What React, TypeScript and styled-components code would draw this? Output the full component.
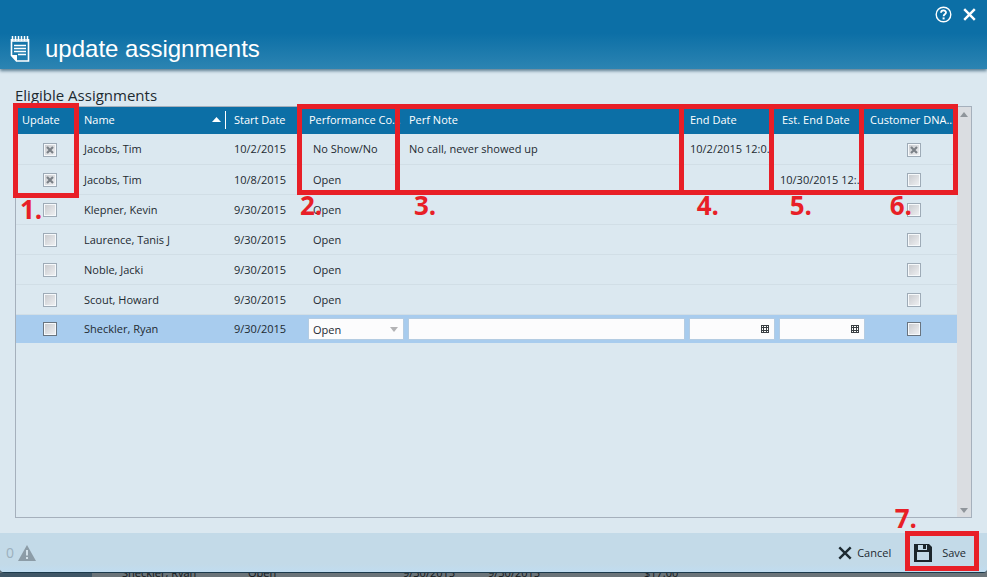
import React from "react";
import styled, { createGlobalStyle, css } from "styled-components";

const uiFont = '"Open Sans", "Noto Sans", sans-serif';
const red = "#e81f27";

const GlobalStyle = createGlobalStyle`
  *, *::before, *::after { box-sizing: border-box; }
  body {
    margin: 0;
    background: #6b7479;
    color: #1d2a31;
    font-family: ${uiFont};
    font-size: 11px;
  }
  button, input, select { font: inherit; color: inherit; }
`;

const Page = styled.div`
  display: flex;
  flex-direction: column;
  min-height: 100vh;
`;

const Dialog = styled.main`
  position: relative;
  flex: 1;
  display: flex;
  flex-direction: column;
  border-bottom: 1px solid #1c3a4c;
  border-radius: 0 0 4px 4px;
  background: #dbe8f0;
`;

const Header = styled.header`
  display: flex;
  flex-direction: column;
  height: 69px;
  padding: 5px 9px 0;
  background: linear-gradient(#0c6fa6, #0c6fa6 48%, #2c84b2);
  box-shadow: 0 2px 3px #5f7f93;
  color: #fff;
`;

const WindowButtons = styled.div`
  display: flex;
  justify-content: flex-end;
  gap: 8px;
  height: 18px;
`;

const IconButton = styled.button`
  display: grid;
  place-items: center;
  width: 18px;
  height: 18px;
  padding: 0;
  border: 0;
  background: none;
  color: inherit;
`;

const TitleRow = styled.div`
  display: flex;
  align-items: center;
  gap: 14px;
  height: 52px;
  padding-top: 6px;
`;

const Title = styled.h1`
  margin: 0;
  font: 400 24px/28px "Liberation Sans", Arial, sans-serif;
`;

const Body = styled.section`
  flex: 1;
  display: flex;
  flex-direction: column;
  padding: 16px 15px 15px;
`;

const Caption = styled.h2`
  margin: 0;
  height: 21px;
  font-size: 15px;
  font-weight: 400;
  line-height: 20px;
`;

const GridFrame = styled.div`
  position: relative;
  flex: 1;
  display: flex;
  border: 1px solid #a5b0bc;
`;

const TableArea = styled.div`
  flex: 1;
  min-width: 0;
`;

const Table = styled.table`
  width: 100%;
  table-layout: fixed;
  border-collapse: collapse;
`;

const Col = styled.col<{ $w?: number }>`
  ${(p) => p.$w && css`width: ${p.$w}px;`}
`;

const HeadCell = styled.th<{ $pad?: number }>`
  height: 27px;
  padding: 0 0 2px ${(p) => p.$pad ?? 6}px;
  background: #0c6fa6;
  color: #fff;
  font-weight: 400;
  text-align: left;
  white-space: nowrap;
`;

const SortLabel = styled.span`
  display: flex;
  align-items: center;
  justify-content: space-between;
  height: 18px;
  padding-right: 4px;
  border-right: 1px solid #fff;
`;

const Row = styled.tr<{ $selected?: boolean }>`
  height: ${(p) => (p.$selected ? 28 : 30)}px;
  border-bottom: 1px solid ${(p) => (p.$selected ? "#a8ccee" : "#d1dee6")};
  background: ${(p) => (p.$selected ? "#a8ccee" : "transparent")};
`;

const Cell = styled.td<{ $pad?: number }>`
  padding: 0 0 0 ${(p) => p.$pad ?? 6}px;
  white-space: nowrap;
`;

const Clip = styled.span<{ $w: number }>`
  display: block;
  width: ${(p) => p.$w}px;
  overflow: hidden;
`;

const TickBox = styled.label`
  display: grid;
  width: 14px;
  height: 14px;
  margin-top: 2px;
  > * { grid-area: 1 / 1; }
  svg { pointer-events: none; place-self: center; }
`;

const Tick = styled.input<{ $strong?: boolean }>`
  appearance: none;
  width: 14px;
  height: 14px;
  margin: 0;
  border: 1px solid ${(p) => (p.$strong ? "#69747f" : "#9eabb7")};
  background: linear-gradient(135deg, #c6c8cc, #f1f2f4);
  box-shadow: inset 0 0 0 1px #f6f9fb;
`;

const Field = styled.div`
  display: flex;
  align-items: center;
  height: 20px;
  margin-top: 2px;
  padding-right: 5px;
  background: #fcfcfd;
  box-shadow: 0 0 0 1px #b4cce2;
`;

const TextInput = styled.input`
  flex: 1;
  min-width: 0;
  height: 20px;
  padding: 0 4px;
  border: 0;
  outline: 0;
  background: transparent;
`;

const Select = styled.select`
  appearance: none;
  flex: 1;
  min-width: 0;
  height: 20px;
  padding: 0 4px;
  border: 0;
  background: transparent;
`;

const PickButton = styled(IconButton)`
  width: 8px;
  height: 8px;
`;

const ScrollBar = styled.div`
  display: flex;
  flex-direction: column;
  justify-content: space-between;
  align-items: center;
  width: 14px;
  padding: 5px 0 4px;
  background: #dadde1;
`;

const Footer = styled.footer`
  display: flex;
  align-items: center;
  justify-content: space-between;
  height: 39px;
  padding: 0 21px 0 6px;
  border-radius: 0 0 4px 4px;
  background: linear-gradient(#c3dae8, #c3dae8 80%, #c0dcf0);
`;

const Status = styled.div`
  display: flex;
  align-items: center;
  gap: 4px;
  color: #9cb0bd;
  font-size: 14px;
`;

const Actions = styled.div`
  display: flex;
  gap: 23px;
`;

const ActionButton = styled.button<{ $gap: number }>`
  display: flex;
  align-items: center;
  gap: ${(p) => p.$gap}px;
  padding: 0;
  border: 0;
  background: none;
`;

const Backdrop = styled.div`
  display: flex;
  align-items: flex-end;
  height: 4px;
  overflow: hidden;
  background: linear-gradient(90deg, #3f5666 92px, #6b7479 92px);
  color: #14191c;
  line-height: 8px;
`;

const BackdropText = styled.span<{ $w: number }>`
  flex: 0 0 ${(p) => p.$w}px;
`;

const Outline = styled.div`
  position: absolute;
  border: 5px solid ${red};
  pointer-events: none;
`;

const UpdateOutline = styled(Outline)`
  left: -3px;
  top: -4px;
  width: 66px;
  height: 95px;
`;

const EditOutline = styled(Outline)`
  display: flex;
  left: 281px;
  right: 13px;
  top: -3px;
  height: 91px;
`;

const Segment = styled.div<{ $w?: number }>`
  flex: ${(p) => (p.$w ? `0 0 ${p.$w}px` : "1")};
  & + & { border-left: 5px solid ${red}; }
`;

const SaveOutline = styled(Outline)`
  right: 8px;
  bottom: 1px;
  width: 74px;
  height: 40px;
`;

const Mark = styled.span<{ $left?: number; $right?: number; $top?: number; $bottom?: number }>`
  position: absolute;
  ${(p) => p.$left !== undefined && css`left: ${p.$left}px;`}
  ${(p) => p.$right !== undefined && css`right: ${p.$right}px;`}
  ${(p) => p.$top !== undefined && css`top: ${p.$top}px;`}
  ${(p) => p.$bottom !== undefined && css`bottom: ${p.$bottom}px;`}
  color: ${red};
  font-size: 26px;
  font-weight: 700;
  line-height: 28px;
  pointer-events: none;
`;

const HelpIcon = () => (
  <svg width="17" height="17" viewBox="0 0 17 17" fill="none" stroke="currentColor">
    <circle cx="8.5" cy="8.5" r="7.3" strokeWidth="1.4" />
    <path d="M6 6.8C6 3.6 11 3.7 11 6.5c0 1.7-2.4 1.8-2.4 3.7" strokeWidth="1.8" />
    <path d="M8.6 11.4v2" strokeWidth="2" />
  </svg>
);

const CrossIcon = ({ size, width }: { size: number; width: number }) => (
  <svg width={size} height={size} viewBox="0 0 14 14" stroke="currentColor" strokeWidth={width}>
    <path d="M1.3 1.3l11.4 11.4M12.7 1.3L1.3 12.7" />
  </svg>
);

const NotepadIcon = () => (
  <svg width="22" height="28" viewBox="0 0 22 28" fill="none" stroke="#fff">
    <path d="M2.5 4v16.5l5 5.5h12V4" strokeWidth="1.6" />
    <path d="M2 5.5h18" strokeWidth="3" opacity="0.75" />
    <path d="M3.5 1v5M6.5 1v5M9.5 1v5M12.5 1v5M15.5 1v5M18.5 1v5" strokeWidth="1.5" />
    <path d="M5 10.5h12M5 13.5h12M5 16.5h12M9 19.5h8" strokeWidth="1.3" />
    <path d="M2 20h6v6.500z" fill="#fff" stroke="none" />
  </svg>
);

const WarningIcon = () => (
  <svg width="18" height="16" viewBox="0 0 18 16">
    <path d="M9 0l9 16H0z" fill="#8c9ca7" />
    <path d="M9 5v5.5M9 12v2" stroke="#d3e1ea" strokeWidth="2" />
  </svg>
);

const SaveIcon = () => (
  <svg width="18" height="18" viewBox="0 0 18 18">
    <path d="M0 0h15l3 3v15H0z" fill="#1b252b" />
    <path d="M4 1h9v5H4z M3 8h12v8H3z" fill="#c3dae8" />
    <path d="M9 1h3v4H9z" fill="#1b252b" />
  </svg>
);

const Triangle = ({ up, w = 8, color = "#8f959b" }: { up?: boolean; w?: number; color?: string }) => (
  <svg width={w} height="5" viewBox="0 0 8 5" preserveAspectRatio="none">
    <path d={up ? "M0 5l4-5 4 5z" : "M0 0l4 5 4-5z"} fill={color} />
  </svg>
);

const CalendarIcon = () => (
  <svg width="8" height="8" viewBox="0 0 8 8">
    <path d="M0 0h8v8H0z" fill="#3b4044" />
    <path d="M1 1h1v1H1zM3 1h2v1H3zM6 1h1v1H6zM1 3h1v2H1zM3 3h2v2H3zM6 3h1v2H6zM1 6h1v1H1zM3 6h2v1H3zM6 6h1v1H6z" fill="#fff" />
  </svg>
);

const Check = ({ label, checked, strong }: { label: string; checked?: boolean; strong?: boolean }) => (
  <TickBox>
    <Tick type="checkbox" aria-label={label} defaultChecked={checked} disabled={!strong} $strong={strong} />
    {checked && (
      <svg width="8" height="8" viewBox="0 0 8 8" stroke="#7b8187" strokeWidth="2.2">
        <path d="M1 1l6 6M7 1L1 7" />
      </svg>
    )}
  </TickBox>
);

interface Assignment {
  name: string;
  start: string;
  code?: string;
  note?: string;
  end?: string;
  estEnd?: string;
  update?: boolean;
  dna?: boolean;
  selected?: boolean;
}

const assignments: Assignment[] = [
  { name: "Jacobs, Tim", start: "10/2/2015", code: "No Show/No Call", note: "No call, never showed up", end: "10/2/2015 12:0...", update: true, dna: true },
  { name: "Jacobs, Tim", start: "10/8/2015", code: "Open", estEnd: "10/30/2015 12:...", update: true },
  { name: "Klepner, Kevin", start: "9/30/2015", code: "Open" },
  { name: "Laurence, Tanis J", start: "9/30/2015", code: "Open" },
  { name: "Noble, Jacki", start: "9/30/2015", code: "Open" },
  { name: "Scout, Howard", start: "9/30/2015", code: "Open" },
  { name: "Sheckler, Ryan", start: "9/30/2015", code: "Open", selected: true },
];

const DateField = ({ label }: { label: string }) => (
  <Field>
    <TextInput aria-label={label} />
    <PickButton aria-label={`Pick ${label}`}><CalendarIcon /></PickButton>
  </Field>
);

const AssignmentRow = ({ item }: { item: Assignment }) => (
  <Row $selected={item.selected}>
    <Cell $pad={27}><Check label={`Update ${item.name}`} checked={item.update} strong={item.selected} /></Cell>
    <Cell>{item.name}</Cell>
    <Cell $pad={8}>{item.start}</Cell>
    {item.selected ? (
      <>
        <Cell>
          <Field>
            <Select aria-label="Performance Code" defaultValue="Open">
              <option>Open</option>
            </Select>
            <Triangle color="#b3b3b5" />
          </Field>
        </Cell>
        <Cell><Field><TextInput aria-label="Perf Note" /></Field></Cell>
        <Cell><DateField label="End Date" /></Cell>
        <Cell><DateField label="Est. End Date" /></Cell>
      </>
    ) : (
      <>
        <Cell $pad={10}><Clip $w={67}>{item.code}</Clip></Cell>
        <Cell>{item.note}</Cell>
        <Cell><Clip $w={83}>{item.end}</Clip></Cell>
        <Cell><Clip $w={83}>{item.estEnd}</Clip></Cell>
      </>
    )}
    <Cell $pad={43}><Check label={`Customer DNA ${item.name}`} checked={item.dna} strong={item.selected} /></Cell>
  </Row>
);

export default function App() {
  return (
    <Page>
      <GlobalStyle />
      <Dialog>
        <Header>
          <WindowButtons>
            <IconButton aria-label="Help"><HelpIcon /></IconButton>
            <IconButton aria-label="Close"><CrossIcon size={13} width={2.6} /></IconButton>
          </WindowButtons>
          <TitleRow>
            <NotepadIcon />
            <Title>update assignments</Title>
          </TitleRow>
        </Header>
        <Body>
          <Caption>Eligible Assignments</Caption>
          <GridFrame>
            <TableArea>
              <Table>
                <colgroup>
                  <Col $w={62} /><Col $w={148} /><Col $w={77} /><Col $w={100} />
                  <Col /><Col $w={90} /><Col $w={90} /><Col $w={93} />
                </colgroup>
                <thead>
                  <tr>
                    <HeadCell>Update</HeadCell>
                    <HeadCell><SortLabel>Name<Triangle up w={9} color="#fff" /></SortLabel></HeadCell>
                    <HeadCell $pad={8}>Start Date</HeadCell>
                    <HeadCell>Performance Co...</HeadCell>
                    <HeadCell>Perf Note</HeadCell>
                    <HeadCell>End Date</HeadCell>
                    <HeadCell $pad={8}>Est. End Date</HeadCell>
                    <HeadCell>Customer DNA...</HeadCell>
                  </tr>
                </thead>
                <tbody>
                  {assignments.map((item, i) => <AssignmentRow key={i} item={item} />)}
                </tbody>
              </Table>
            </TableArea>
            <ScrollBar><Triangle up /><Triangle /></ScrollBar>
            <UpdateOutline />
            <EditOutline>
              <Segment $w={93} /><Segment /><Segment $w={90} /><Segment $w={90} /><Segment $w={94} />
            </EditOutline>
            <Mark $left={4} $top={88}>1.</Mark>
            <Mark $left={284} $top={84}>2.</Mark>
            <Mark $left={398} $top={84}>3.</Mark>
            <Mark $right={252} $top={84}>4.</Mark>
            <Mark $right={159} $top={84}>5.</Mark>
            <Mark $right={59} $top={84}>6.</Mark>
          </GridFrame>
        </Body>
        <Footer>
          <Status>0<WarningIcon /></Status>
          <Actions>
            <ActionButton $gap={5}><CrossIcon size={14} width={2.4} />Cancel</ActionButton>
            <ActionButton $gap={10}><SaveIcon />Save</ActionButton>
          </Actions>
        </Footer>
        <SaveOutline />
        <Mark $right={70} $bottom={40}>7.</Mark>
      </Dialog>
      <Backdrop>
        <BackdropText $w={122} />
        <BackdropText $w={126}>Sheckler, Ryan</BackdropText>
        <BackdropText $w={155}>Open</BackdropText>
        <BackdropText $w={85}>9/30/2015</BackdropText>
        <BackdropText $w={156}>9/30/2015</BackdropText>
        <BackdropText $w={60}>$17.00</BackdropText>
      </Backdrop>
    </Page>
  );
}
